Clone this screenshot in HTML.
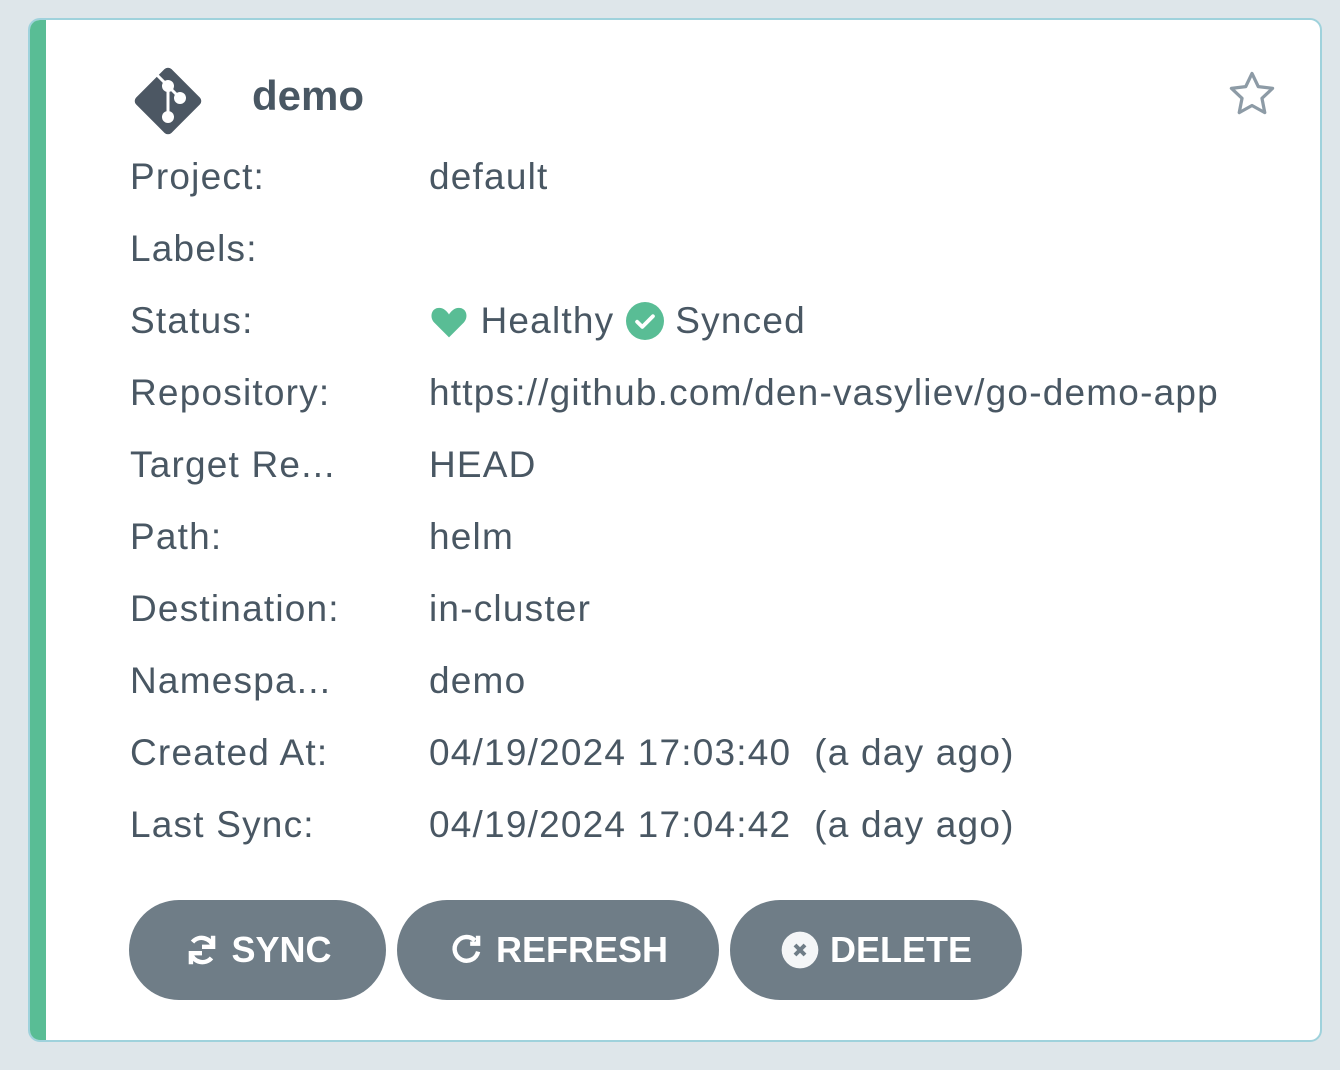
<!DOCTYPE html>
<html><head><style>
body{margin:0;width:1340px;height:1070px;background:#dee6ea;font-family:"Liberation Sans",sans-serif;overflow:hidden}
.card{position:absolute;left:28px;top:18px;width:1290px;height:1020px;background:#fff;border:2px solid #9fd2dc;border-radius:12px;overflow:hidden}
.bar{position:absolute;left:0;top:0;bottom:0;width:16px;background:#59bd95}
.title{position:absolute;left:222px;top:52px;font-size:42px;font-weight:bold;color:#495763}
.row{position:absolute;left:100px;font-size:37px;letter-spacing:1.2px;color:#495763;height:50px;line-height:50px;white-space:nowrap}
.row .v{position:absolute;left:299px}
.btn{position:absolute;top:880px;height:100px;border-radius:50px;background:#6f7d87;color:#fff;font-weight:bold;font-size:36px;display:flex;align-items:center;justify-content:center;gap:10px}
</style></head><body>
<div class="card">
<div class="bar"></div>
<svg style="position:absolute;left:100px;top:43px" width="76" height="76" viewBox="0 0 76 76">
<rect x="13" y="13" width="50" height="50" rx="5" transform="rotate(45 38 38)" fill="#4c5763"/>
<path d="M26 11 L38 23 L38 54 M38 23 L50 35" stroke="#fff" stroke-width="3" fill="none"/>
<circle cx="38" cy="23" r="6" fill="#fff"/><circle cx="50" cy="35" r="6" fill="#fff"/><circle cx="38" cy="54" r="6" fill="#fff"/>
</svg>
<div class="title">demo</div>
<svg style="position:absolute;left:1196px;top:48px" width="52" height="52" viewBox="0 0 24 24"><path d="M12 2.5l2.9 6.1 6.6.8-4.9 4.6 1.3 6.6L12 17.3l-5.9 3.3 1.3-6.6-4.9-4.6 6.6-.8z" fill="none" stroke="#8d9ba6" stroke-width="1.5" stroke-linejoin="round"/></svg>
<div class="row" style="top:132px">Project:<span class="v">default</span></div>
<div class="row" style="top:204px">Labels:</div>
<div class="row" style="top:276px">Status:<span class="v"><svg width="40" height="36" viewBox="0 0 24 22" style="vertical-align:-6px"><path d="M12 21L3 12C0 9 1 3 6 3c3 0 5 2.5 6 4 1-1.5 3-4 6-4 5 0 6 6 3 9z" fill="#59bd95"/></svg> Healthy <svg width="38" height="38" viewBox="0 0 24 24" style="vertical-align:-7px"><circle cx="12" cy="12" r="12" fill="#59bd95"/><path d="M7 12.5l3.3 3.2L17 9" stroke="#fff" stroke-width="2.4" fill="none" stroke-linecap="round" stroke-linejoin="round"/></svg> Synced</span></div>
<div class="row" style="top:348px">Repository:<span class="v">https://github.com/den-vasyliev/go-demo-app</span></div>
<div class="row" style="top:420px">Target Re...<span class="v">HEAD</span></div>
<div class="row" style="top:492px">Path:<span class="v">helm</span></div>
<div class="row" style="top:564px">Destination:<span class="v">in-cluster</span></div>
<div class="row" style="top:636px">Namespa...<span class="v">demo</span></div>
<div class="row" style="top:708px">Created At:<span class="v">04/19/2024 17:03:40&nbsp; (a day ago)</span></div>
<div class="row" style="top:780px">Last Sync:<span class="v">04/19/2024 17:04:42&nbsp; (a day ago)</span></div>
<div class="btn" style="left:99px;width:257px"><svg width="38" height="38" viewBox="0 0 24 24"><path d="M19 10A7.5 7.5 0 0 0 6 7M5 14a7.5 7.5 0 0 0 13 3" stroke="#fff" stroke-width="2.8" fill="none"/><path d="M19 3v7h-7M5 21v-7h7" stroke="#fff" stroke-width="2.8" fill="none"/></svg>SYNC</div>
<div class="btn" style="left:367px;width:322px"><svg width="38" height="38" viewBox="0 0 24 24"><path d="M19 13a7.5 7.5 0 1 1-2-7" stroke="#fff" stroke-width="2.8" fill="none"/><path d="M19 3v5h-5" stroke="#fff" stroke-width="2.8" fill="none"/></svg>REFRESH</div>
<div class="btn" style="left:700px;width:292px"><svg width="40" height="40" viewBox="0 0 24 24"><circle cx="12" cy="12" r="11" fill="#f4f6f7"/><path d="M9 9l6 6M15 9l-6 6" stroke="#6f7d87" stroke-width="2.4"/></svg>DELETE</div>
</div>
</body></html>
